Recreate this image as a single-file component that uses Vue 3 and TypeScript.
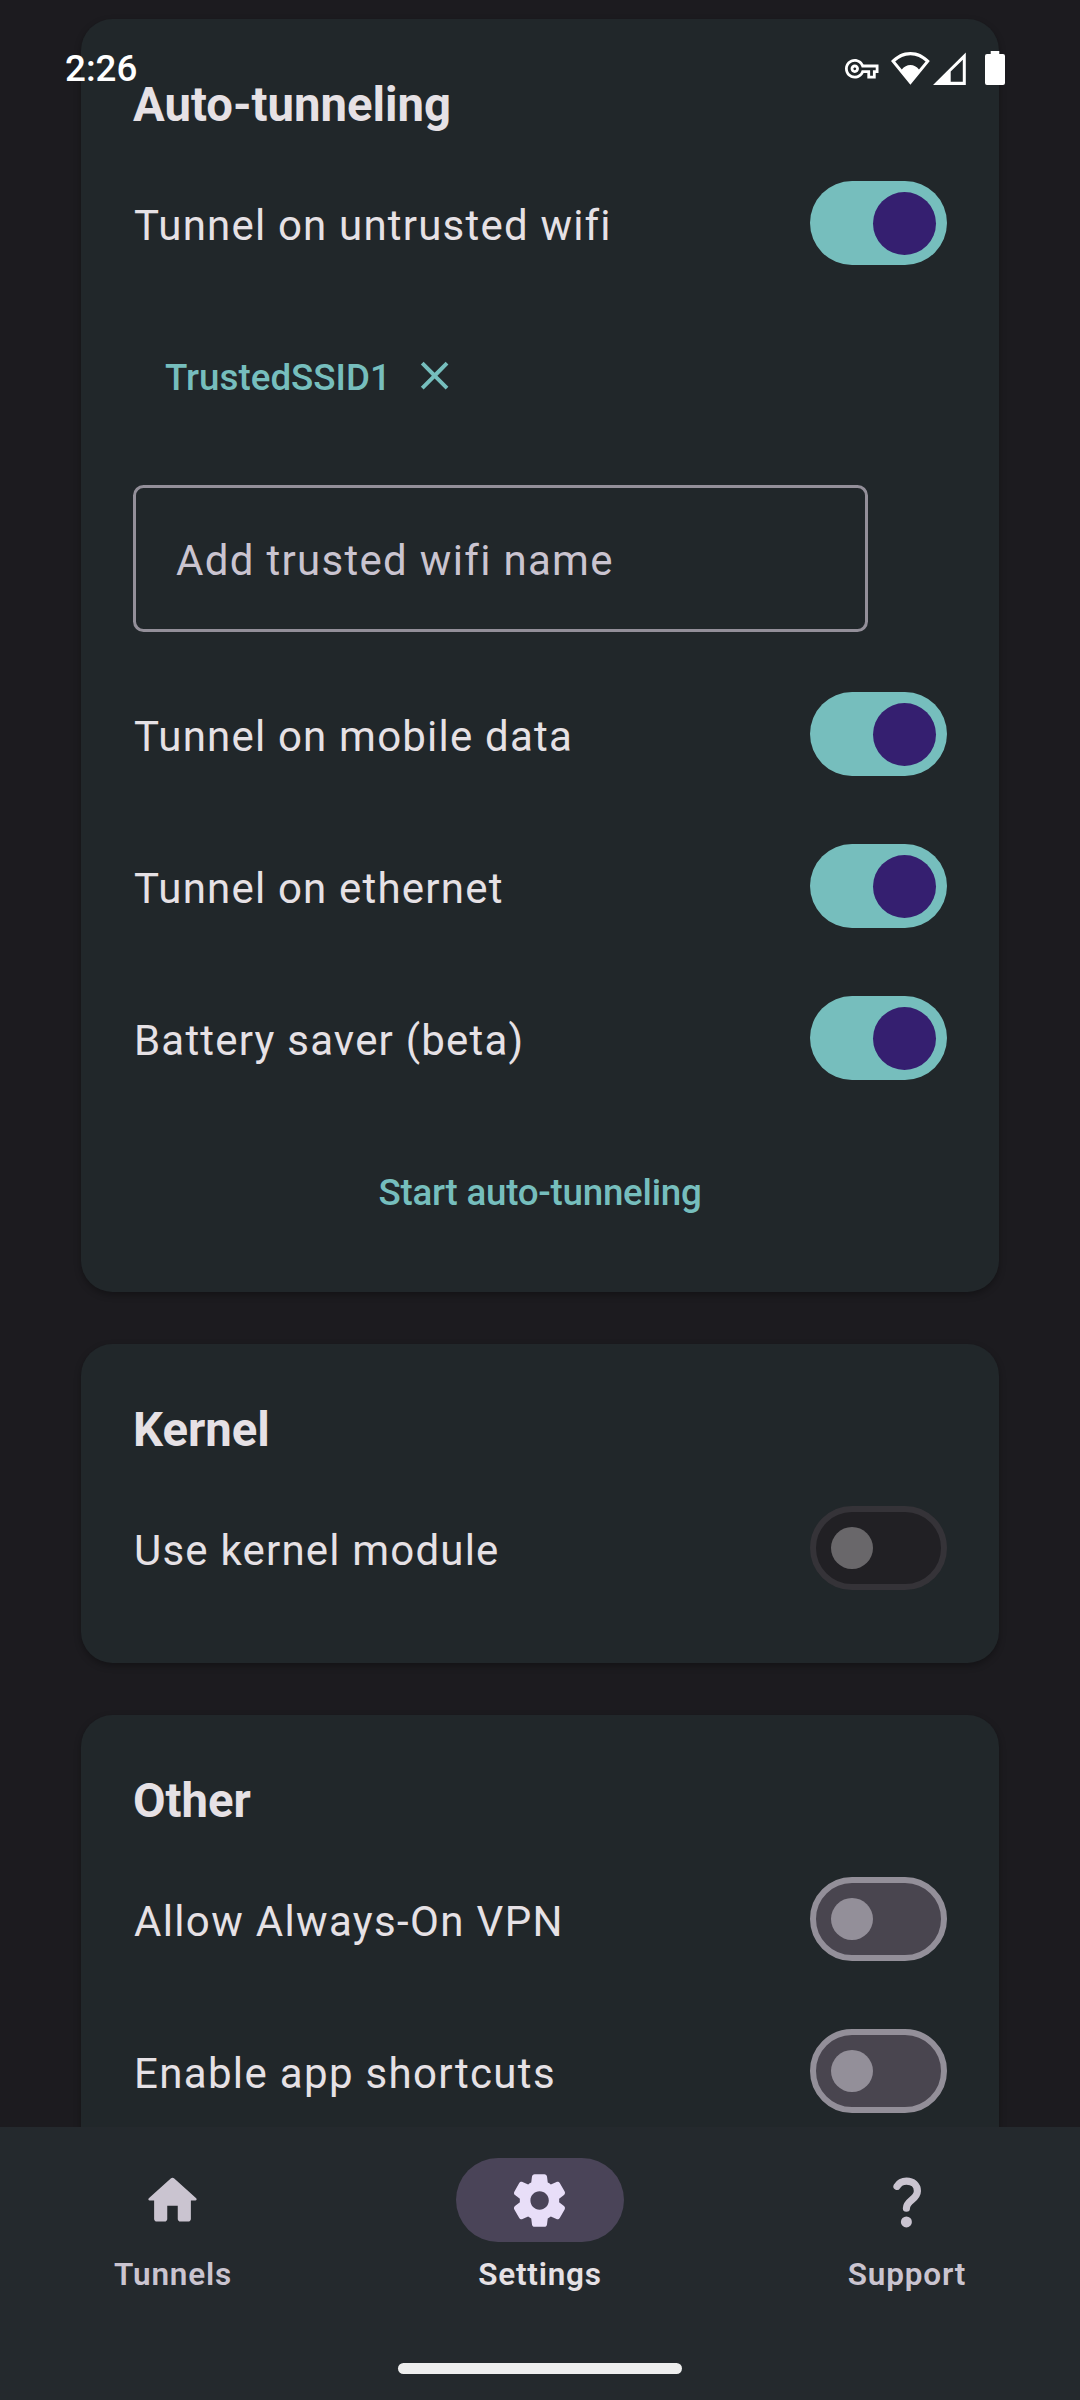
<script setup lang="ts">
import { ref } from 'vue'

interface Toggle {
  label: string
  on: boolean
  disabled?: boolean
}

const wifi = ref<Toggle[]>([{ label: 'Tunnel on untrusted wifi', on: true }])
const networks = ref<Toggle[]>([
  { label: 'Tunnel on mobile data', on: true },
  { label: 'Tunnel on ethernet', on: true },
  { label: 'Battery saver (beta)', on: true },
])
const kernel = ref<Toggle[]>([{ label: 'Use kernel module', on: false, disabled: true }])
const other = ref<Toggle[]>([
  { label: 'Allow Always-On VPN', on: false },
  { label: 'Enable app shortcuts', on: false },
])
const trusted = ref<string[]>(['TrustedSSID1'])

function flip(t: Toggle) {
  if (!t.disabled) t.on = !t.on
}
function removeSsid(name: string) {
  trusted.value = trusted.value.filter((n) => n !== name)
}
</script>

<template>
  <div class="screen">
    <main class="content">
      <section class="card">
        <h2 class="title">Auto-tunneling</h2>
        <div v-for="t in wifi" :key="t.label" class="row" @click="flip(t)">
          <span class="label">{{ t.label }}</span>
          <span class="switch" :class="{ on: t.on, disabled: t.disabled }"><i class="thumb"></i></span>
        </div>
        <div class="chips">
          <span v-for="name in trusted" :key="name" class="chip">
            <span class="chip-text">{{ name }}</span>
            <svg class="close" viewBox="0 0 24 24" @click="removeSsid(name)">
              <path d="M19 6.41 17.59 5 12 10.59 6.41 5 5 6.41 10.59 12 5 17.59 6.41 19 12 13.41 17.59 19 19 17.59 13.41 12z" />
            </svg>
          </span>
        </div>
        <div class="field">Add trusted wifi name</div>
        <div v-for="t in networks" :key="t.label" class="row" @click="flip(t)">
          <span class="label">{{ t.label }}</span>
          <span class="switch" :class="{ on: t.on, disabled: t.disabled }"><i class="thumb"></i></span>
        </div>
        <div class="action">Start auto-tunneling</div>
      </section>

      <section class="card">
        <h2 class="title">Kernel</h2>
        <div v-for="t in kernel" :key="t.label" class="row" @click="flip(t)">
          <span class="label">{{ t.label }}</span>
          <span class="switch" :class="{ on: t.on, disabled: t.disabled }"><i class="thumb"></i></span>
        </div>
      </section>

      <section class="card">
        <h2 class="title">Other</h2>
        <div v-for="t in other" :key="t.label" class="row" @click="flip(t)">
          <span class="label wide">{{ t.label }}</span>
          <span class="switch" :class="{ on: t.on, disabled: t.disabled }"><i class="thumb"></i></span>
        </div>
      </section>
    </main>

    <nav class="nav">
      <div class="tabs">
        <div class="tab">
          <span class="pill">
            <svg class="icon" viewBox="0 0 24 24">
              <path d="M10 19v-5h4v5c0 .55.45 1 1 1h3c.55 0 1-.45 1-1v-7h1.7c.46 0 .68-.57.33-.87L12.67 3.6c-.38-.34-.96-.34-1.34 0l-8.36 7.53c-.34.3-.13.87.33.87H5v7c0 .55.45 1 1 1h3c.55 0 1-.45 1-1z" />
            </svg>
          </span>
          <span class="tab-label">Tunnels</span>
        </div>
        <div class="tab active">
          <span class="pill">
            <svg class="icon" viewBox="0 0 24 24">
              <path d="M19.5 12c0-.23-.01-.45-.03-.68l1.86-1.41c.4-.3.51-.86.26-1.3l-1.87-3.23c-.25-.44-.79-.62-1.25-.42l-2.15.91c-.37-.26-.76-.49-1.17-.68l-.29-2.31c-.06-.5-.49-.88-.99-.88h-3.73c-.51 0-.94.38-1 .88l-.29 2.31c-.41.19-.8.42-1.17.68l-2.15-.91c-.46-.2-1-.02-1.25.42L2.41 8.62c-.25.44-.14.99.26 1.3l1.86 1.41c-.02.22-.03.44-.03.67s.01.45.03.68l-1.86 1.41c-.4.3-.51.86-.26 1.3l1.87 3.23c.25.44.79.62 1.25.42l2.15-.91c.37.26.76.49 1.17.68l.29 2.31c.06.5.49.88.99.88h3.73c.5 0 .93-.38.99-.88l.29-2.31c.41-.19.8-.42 1.17-.68l2.15.91c.46.2 1 .02 1.25-.42l1.87-3.23c.25-.44.14-.99-.26-1.3l-1.86-1.41c.03-.23.04-.45.04-.68zm-7.46 3.5c-1.93 0-3.5-1.57-3.5-3.5s1.57-3.5 3.5-3.5 3.5 1.57 3.5 3.5-1.57 3.5-3.5 3.5z" />
            </svg>
          </span>
          <span class="tab-label">Settings</span>
        </div>
        <div class="tab">
          <span class="pill">
            <svg class="icon" viewBox="0 0 63 63">
              <path class="hook" d="M22 17.3C24 14 27.5 12.1 31.5 12.1C38 12.1 42.4 16.3 42.4 22C42.4 30.5 31.4 31.5 31.4 39.2" />
              <circle cx="31.4" cy="52.9" r="5.5" />
            </svg>
          </span>
          <span class="tab-label">Support</span>
        </div>
      </div>
      <div class="handle"></div>
    </nav>

    <header class="status">
      <span class="time">2:26</span>
      <span class="indicators">
        <svg class="key" width="33.5" height="19.6" viewBox="0 5 24 14">
          <path d="M22 19h-6v-4h-2.68c-1.14 2.42-3.6 4-6.32 4-3.86 0-7-3.14-7-7s3.14-7 7-7c2.72 0 5.17 1.58 6.32 4H24v6h-2v4zm-4-2h2v-4h2v-2H11.94l-.23-.67C11.01 8.34 9.11 7 7 7c-2.76 0-5 2.24-5 5s2.24 5 5 5c2.11 0 4.01-1.34 4.71-3.33l.23-.67H18v4zM7 15c-1.65 0-3-1.35-3-3s1.35-3 3-3 3 1.35 3 3-1.35 3-3 3zm0-4c-.55 0-1 .45-1 1s.45 1 1 1 1-.45 1-1-.45-1-1-1z" />
        </svg>
        <svg class="wifi" width="39" height="33" viewBox="0 0 39 33">
          <path fill-rule="evenodd" d="M0 9C5.5 3.3 12 0 19.4 0S33.3 3.3 38.8 9L19.4 32.8zM4.2 9.6L10.8 17.6C13.2 14.5 16 13 19.4 13S25.6 14.5 28 17.6L34.6 9.6C30.5 5.6 25.5 3.3 19.4 3.3S8.3 5.6 4.2 9.6z" />
        </svg>
        <svg class="signal" width="33" height="33" viewBox="0 0 33 33">
          <path fill-rule="evenodd" d="M0 33L32.8 .5V33zM17.7 19.5V29.8H29.8V7.8z" />
        </svg>
        <svg class="battery" width="20" height="34" viewBox="0 0 20 34">
          <path d="M5.7 0H14.3V3H18Q20 3 20 5V32Q20 34 18 34H2Q0 34 0 32V5Q0 3 2 3H5.7z" />
        </svg>
      </span>
    </header>
  </div>
</template>

<style>
body {
  margin: 0;
  background: #1c1b1f;
}
</style>

<style scoped>
.screen {
  position: relative;
  display: flex;
  flex-direction: column;
  width: 1080px;
  height: 2400px;
  overflow: hidden;
  background: #1c1b1f;
  color: #e6e1e5;
  font-family: Roboto, "Liberation Sans", sans-serif;
}
.content {
  flex: 1;
  min-height: 0;
  overflow: hidden;
  display: flex;
  flex-direction: column;
  gap: 52px;
  padding: 19px 81px 0;
}
.card {
  flex: none;
  padding: 58px 52px 39px;
  border-radius: 31.5px;
  background: #21272a;
  box-shadow: 0 3px 7px rgba(0, 0, 0, 0.3);
}
.title {
  margin: 0 0 14px;
  font-size: 47.25px;
  line-height: 56px;
  font-weight: 700;
}
.row {
  display: flex;
  align-items: center;
  justify-content: space-between;
  height: 152px;
}
.label {
  padding: 5px 0 0 1px;
  font-size: 42px;
  line-height: 63px;
  letter-spacing: 1.2px;
  white-space: nowrap;
}
.label.wide {
  letter-spacing: 1.34px;
}
.switch {
  box-sizing: border-box;
  display: flex;
  align-items: center;
  width: 137px;
  height: 84px;
  padding-left: 15px;
  border: 6px solid #938f99;
  border-radius: 42px;
  background: #49454f;
}
.thumb {
  width: 42px;
  height: 42px;
  border-radius: 50%;
  background: #938f99;
}
.switch.on {
  justify-content: flex-end;
  padding: 0 11px 0 0;
  border: 0;
  background: #76bebd;
}
.switch.on .thumb {
  width: 63px;
  height: 63px;
  background: #351f70;
}
.switch.disabled {
  border-color: #353338;
  background: #212024;
}
.switch.disabled .thumb {
  background: #69676a;
}
.chips {
  display: flex;
  align-items: center;
  height: 157px;
  margin-bottom: 29px;
  padding-left: 32px;
}
.chip {
  display: flex;
  align-items: center;
  gap: 20.5px;
  color: #76bebd;
}
.chip-text {
  font-size: 36.75px;
  line-height: 52px;
  font-weight: 500;
}
.close {
  width: 47.25px;
  height: 47.25px;
  margin-bottom: 4px;
  fill: currentColor;
}
.field {
  box-sizing: border-box;
  display: flex;
  align-items: center;
  width: 735px;
  height: 147px;
  margin-bottom: 26px;
  padding: 4px 39px 0 40px;
  border: 3px solid #938f99;
  border-radius: 10.5px;
  color: #cac4d0;
  font-size: 42px;
  letter-spacing: 1.31px;
}
.action {
  box-sizing: border-box;
  height: 139px;
  padding-top: 18px;
  color: #76bebd;
  font-size: 36.75px;
  line-height: 121px;
  font-weight: 500;
  letter-spacing: -0.26px;
  text-align: center;
}
.nav {
  flex: none;
  display: flex;
  flex-direction: column;
  align-items: center;
  justify-content: space-between;
  box-sizing: border-box;
  height: 273px;
  padding: 31px 0 26px;
  background: #24292d;
}
.tabs {
  display: flex;
  gap: 21px;
  width: 100%;
}
.tab {
  flex: 1;
  display: flex;
  flex-direction: column;
  align-items: center;
  gap: 11px;
  color: #cac4d0;
}
.pill {
  display: flex;
  align-items: center;
  justify-content: center;
  width: 168px;
  height: 84px;
  border-radius: 42px;
}
.icon {
  width: 63px;
  height: 63px;
  margin-right: 2px;
  fill: currentColor;
}
.hook {
  fill: none;
  stroke: currentColor;
  stroke-width: 7.2;
  stroke-linecap: round;
}
.tab-label {
  font-size: 31.5px;
  line-height: 44px;
  font-weight: 600;
  letter-spacing: 0.8px;
}
.active {
  color: #e6e1e5;
}
.active .pill {
  background: #4a4458;
  color: #e8def8;
}
.handle {
  width: 284px;
  height: 11px;
  border-radius: 5.5px;
  background: #eee;
}
.status {
  position: absolute;
  inset: 0 0 auto 0;
  box-sizing: border-box;
  display: flex;
  align-items: center;
  justify-content: space-between;
  height: 136px;
  padding: 0 75px 0 65px;
  color: #fff;
}
.time {
  padding-top: 1px;
  font-size: 36.75px;
  line-height: 44px;
  font-weight: 500;
}
.indicators {
  display: flex;
  align-items: center;
  fill: currentColor;
}
.key {
  margin: 2px 12.5px 0 0;
}
.wifi {
  margin-right: 3px;
}
.signal {
  margin-right: 19px;
}
</style>
